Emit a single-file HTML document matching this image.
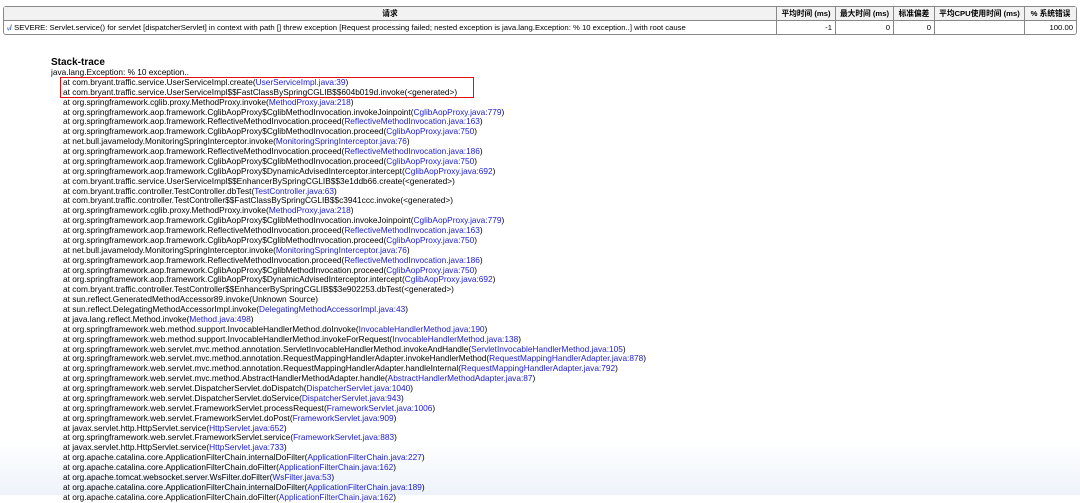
<!DOCTYPE html>
<html><head><meta charset="utf-8"><style>
body{margin:0;width:1080px;height:495px;overflow:hidden;background:linear-gradient(#fff 0,#fff 440px,#eef3fb 495px);font-family:"Liberation Sans","Noto Sans CJK SC",sans-serif;color:#000}
table{position:absolute;left:3px;top:6px;width:1074px;border-collapse:separate;border-spacing:0;border:1px solid #888;border-radius:3px;font-size:7.7px}
th{background:#f2f2f2;font-weight:bold;height:13px;border-left:1px solid #888;border-bottom:1px solid #888;padding:0 3px;white-space:nowrap}
td{height:13px;border-left:1px solid #888;padding:0 3px;white-space:nowrap}
th:first-child,td:first-child{border-left:none}
.r{text-align:right}
#st{position:absolute;left:51px;top:57px;font-size:8.3px;line-height:9.88px;white-space:pre}
#st b{font-size:10px;display:block;line-height:11px;margin-bottom:0}
.i{padding-left:12px}
a{color:#2020d0;text-decoration:none}
#box{position:absolute;left:60px;top:77px;width:412px;height:19px;border:1.5px solid #e01010}
</style></head><body>
<table><tr><th>请求</th><th style="width:52px">平均时间 (ms)</th><th style="width:51px">最大时间 (ms)</th><th style="width:34px">标准偏差</th><th style="width:83px">平均CPU使用时间 (ms)</th><th style="width:45px">% 系统错误</th></tr>
<tr><td><span style="color:#4a70b0;font-weight:bold">ᵥ/</span> SEVERE: Servlet.service() for servlet [dispatcherServlet] in context with path [] threw exception [Request processing failed; nested exception is java.lang.Exception: % 10 exception..] with root cause</td><td class="r">-1</td><td class="r">0</td><td class="r">0</td><td></td><td class="r">100.00</td></tr></table>
<div id="box"></div>
<div id="st"><b>Stack-trace</b>java.lang.Exception: % 10 exception..
<span class="i">at com.bryant.traffic.service.UserServiceImpl.create(<a>UserServiceImpl.java:39</a>)</span>
<span class="i">at com.bryant.traffic.service.UserServiceImpl$$FastClassBySpringCGLIB$$604b019d.invoke(&lt;generated&gt;)</span>
<span class="i">at org.springframework.cglib.proxy.MethodProxy.invoke(<a>MethodProxy.java:218</a>)</span>
<span class="i">at org.springframework.aop.framework.CglibAopProxy$CglibMethodInvocation.invokeJoinpoint(<a>CglibAopProxy.java:779</a>)</span>
<span class="i">at org.springframework.aop.framework.ReflectiveMethodInvocation.proceed(<a>ReflectiveMethodInvocation.java:163</a>)</span>
<span class="i">at org.springframework.aop.framework.CglibAopProxy$CglibMethodInvocation.proceed(<a>CglibAopProxy.java:750</a>)</span>
<span class="i">at net.bull.javamelody.MonitoringSpringInterceptor.invoke(<a>MonitoringSpringInterceptor.java:76</a>)</span>
<span class="i">at org.springframework.aop.framework.ReflectiveMethodInvocation.proceed(<a>ReflectiveMethodInvocation.java:186</a>)</span>
<span class="i">at org.springframework.aop.framework.CglibAopProxy$CglibMethodInvocation.proceed(<a>CglibAopProxy.java:750</a>)</span>
<span class="i">at org.springframework.aop.framework.CglibAopProxy$DynamicAdvisedInterceptor.intercept(<a>CglibAopProxy.java:692</a>)</span>
<span class="i">at com.bryant.traffic.service.UserServiceImpl$$EnhancerBySpringCGLIB$$3e1ddb66.create(&lt;generated&gt;)</span>
<span class="i">at com.bryant.traffic.controller.TestController.dbTest(<a>TestController.java:63</a>)</span>
<span class="i">at com.bryant.traffic.controller.TestController$$FastClassBySpringCGLIB$$c3941ccc.invoke(&lt;generated&gt;)</span>
<span class="i">at org.springframework.cglib.proxy.MethodProxy.invoke(<a>MethodProxy.java:218</a>)</span>
<span class="i">at org.springframework.aop.framework.CglibAopProxy$CglibMethodInvocation.invokeJoinpoint(<a>CglibAopProxy.java:779</a>)</span>
<span class="i">at org.springframework.aop.framework.ReflectiveMethodInvocation.proceed(<a>ReflectiveMethodInvocation.java:163</a>)</span>
<span class="i">at org.springframework.aop.framework.CglibAopProxy$CglibMethodInvocation.proceed(<a>CglibAopProxy.java:750</a>)</span>
<span class="i">at net.bull.javamelody.MonitoringSpringInterceptor.invoke(<a>MonitoringSpringInterceptor.java:76</a>)</span>
<span class="i">at org.springframework.aop.framework.ReflectiveMethodInvocation.proceed(<a>ReflectiveMethodInvocation.java:186</a>)</span>
<span class="i">at org.springframework.aop.framework.CglibAopProxy$CglibMethodInvocation.proceed(<a>CglibAopProxy.java:750</a>)</span>
<span class="i">at org.springframework.aop.framework.CglibAopProxy$DynamicAdvisedInterceptor.intercept(<a>CglibAopProxy.java:692</a>)</span>
<span class="i">at com.bryant.traffic.controller.TestController$$EnhancerBySpringCGLIB$$3e902253.dbTest(&lt;generated&gt;)</span>
<span class="i">at sun.reflect.GeneratedMethodAccessor89.invoke(Unknown Source)</span>
<span class="i">at sun.reflect.DelegatingMethodAccessorImpl.invoke(<a>DelegatingMethodAccessorImpl.java:43</a>)</span>
<span class="i">at java.lang.reflect.Method.invoke(<a>Method.java:498</a>)</span>
<span class="i">at org.springframework.web.method.support.InvocableHandlerMethod.doInvoke(<a>InvocableHandlerMethod.java:190</a>)</span>
<span class="i">at org.springframework.web.method.support.InvocableHandlerMethod.invokeForRequest(<a>InvocableHandlerMethod.java:138</a>)</span>
<span class="i">at org.springframework.web.servlet.mvc.method.annotation.ServletInvocableHandlerMethod.invokeAndHandle(<a>ServletInvocableHandlerMethod.java:105</a>)</span>
<span class="i">at org.springframework.web.servlet.mvc.method.annotation.RequestMappingHandlerAdapter.invokeHandlerMethod(<a>RequestMappingHandlerAdapter.java:878</a>)</span>
<span class="i">at org.springframework.web.servlet.mvc.method.annotation.RequestMappingHandlerAdapter.handleInternal(<a>RequestMappingHandlerAdapter.java:792</a>)</span>
<span class="i">at org.springframework.web.servlet.mvc.method.AbstractHandlerMethodAdapter.handle(<a>AbstractHandlerMethodAdapter.java:87</a>)</span>
<span class="i">at org.springframework.web.servlet.DispatcherServlet.doDispatch(<a>DispatcherServlet.java:1040</a>)</span>
<span class="i">at org.springframework.web.servlet.DispatcherServlet.doService(<a>DispatcherServlet.java:943</a>)</span>
<span class="i">at org.springframework.web.servlet.FrameworkServlet.processRequest(<a>FrameworkServlet.java:1006</a>)</span>
<span class="i">at org.springframework.web.servlet.FrameworkServlet.doPost(<a>FrameworkServlet.java:909</a>)</span>
<span class="i">at javax.servlet.http.HttpServlet.service(<a>HttpServlet.java:652</a>)</span>
<span class="i">at org.springframework.web.servlet.FrameworkServlet.service(<a>FrameworkServlet.java:883</a>)</span>
<span class="i">at javax.servlet.http.HttpServlet.service(<a>HttpServlet.java:733</a>)</span>
<span class="i">at org.apache.catalina.core.ApplicationFilterChain.internalDoFilter(<a>ApplicationFilterChain.java:227</a>)</span>
<span class="i">at org.apache.catalina.core.ApplicationFilterChain.doFilter(<a>ApplicationFilterChain.java:162</a>)</span>
<span class="i">at org.apache.tomcat.websocket.server.WsFilter.doFilter(<a>WsFilter.java:53</a>)</span>
<span class="i">at org.apache.catalina.core.ApplicationFilterChain.internalDoFilter(<a>ApplicationFilterChain.java:189</a>)</span>
<span class="i">at org.apache.catalina.core.ApplicationFilterChain.doFilter(<a>ApplicationFilterChain.java:162</a>)</span></div>
</body></html>
